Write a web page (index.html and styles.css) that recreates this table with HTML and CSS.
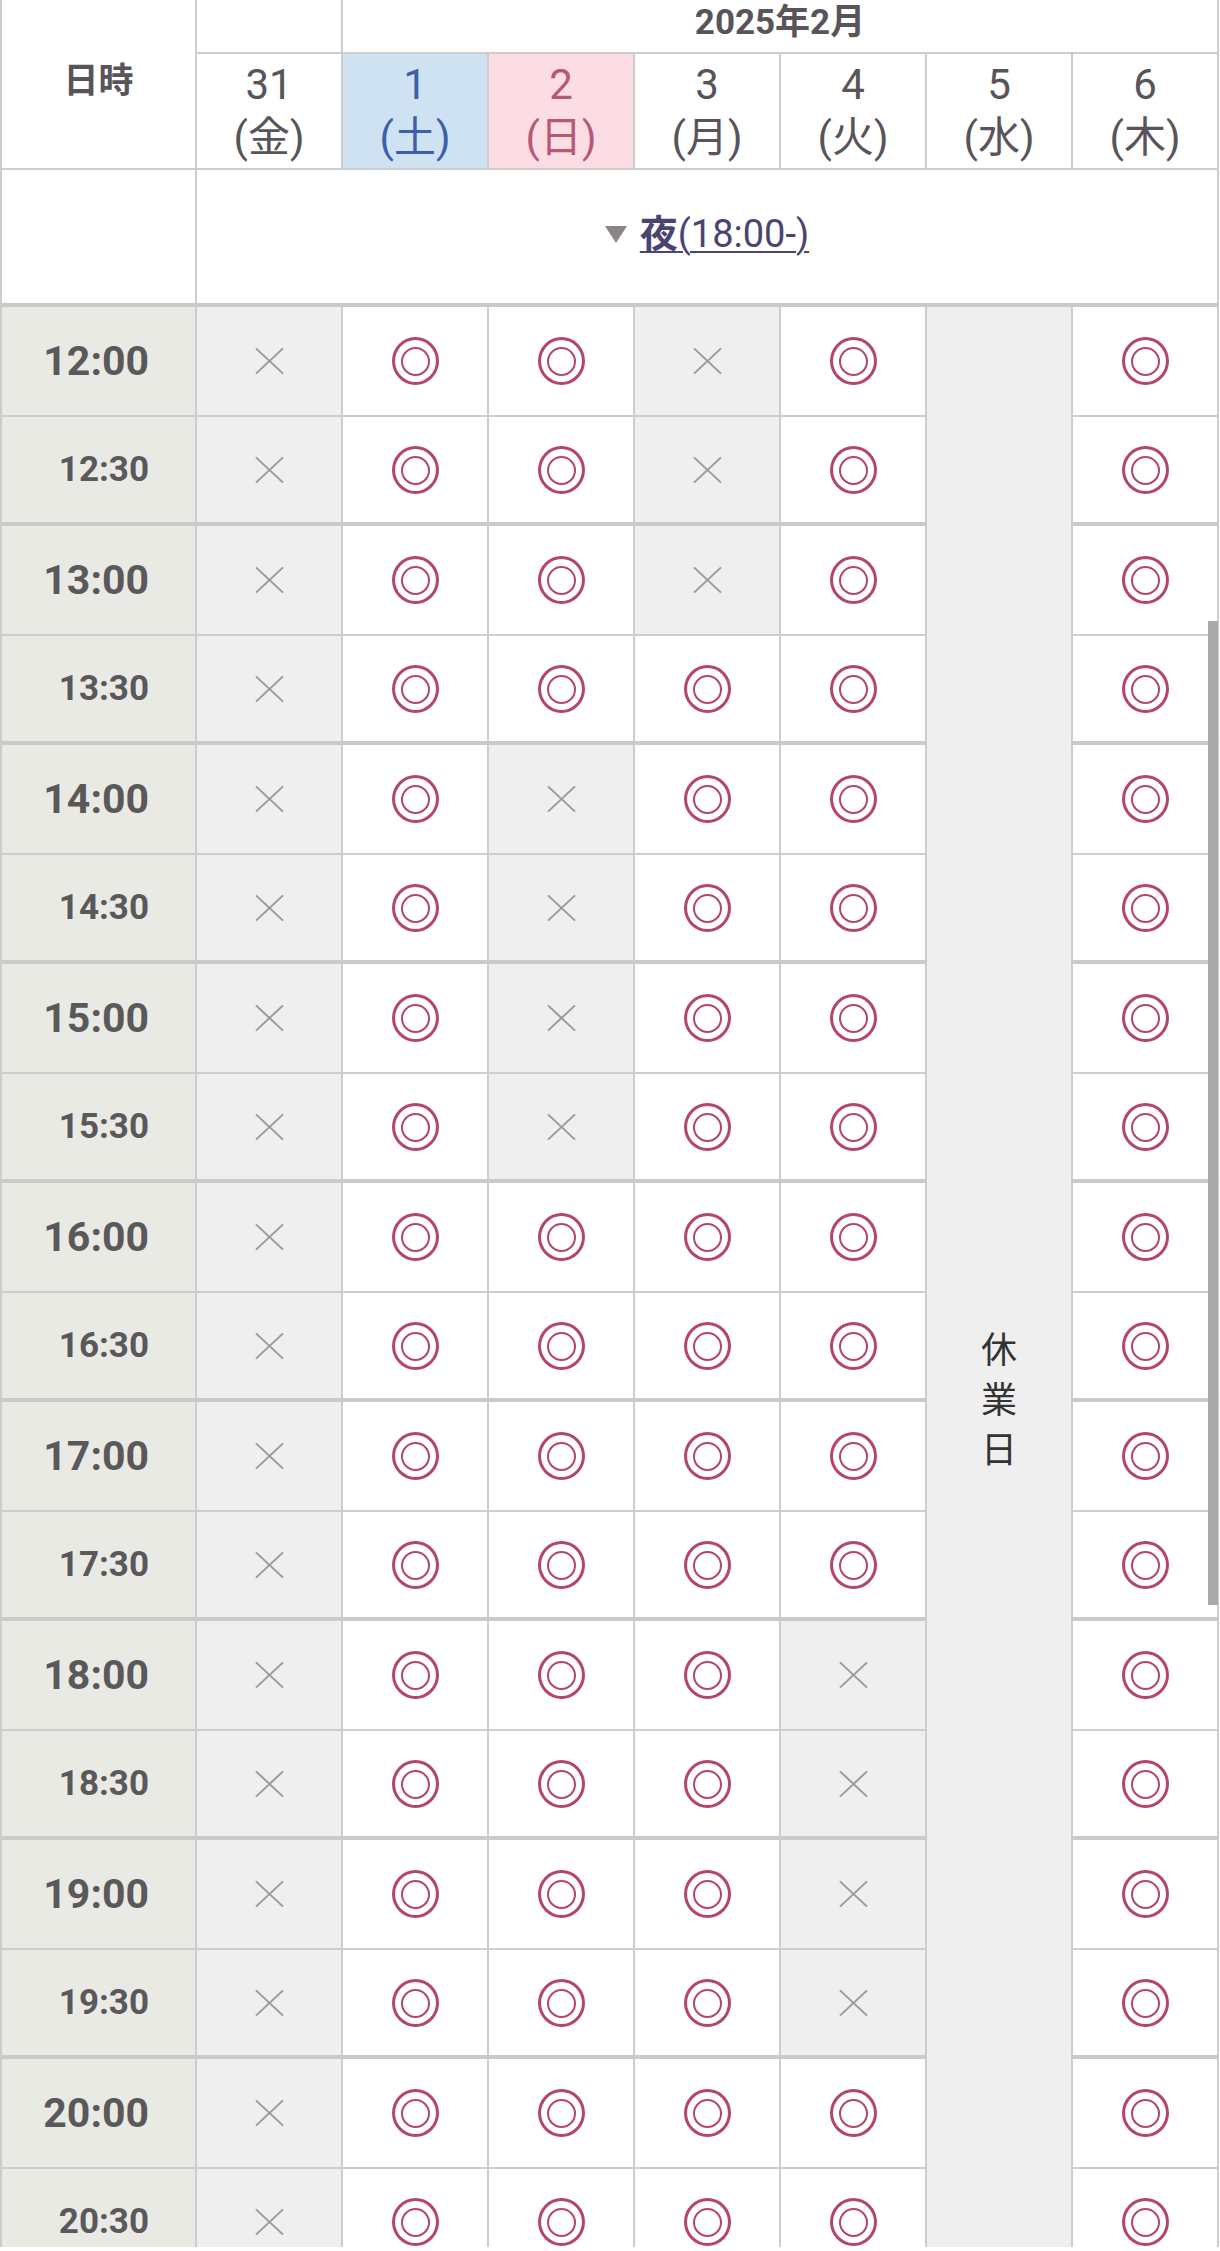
FILE: index.html
```html
<!DOCTYPE html>
<html lang="ja">
<head>
<meta charset="utf-8">
<title>予約カレンダー</title>
<link rel="stylesheet" href="styles.css">
</head>
<body>
<div class="wrap">
<table class="cal">
  <colgroup>
    <col class="c-time">
    <col class="c-day"><col class="c-day"><col class="c-day"><col class="c-day"><col class="c-day"><col class="c-day"><col class="c-day">
  </colgroup>
  <thead>
    <tr class="hd1">
      <th class="hd-date" rowspan="2"><span class="lbl">日時</span></th>
      <th></th>
      <th class="hd-month" colspan="6"><span class="lbl">2025年2月</span></th>
    </tr>
    <tr class="hd2">
      <th class="day">31<br>(金)</th>
      <th class="day sat">1<br>(土)</th>
      <th class="day sun">2<br>(日)</th>
      <th class="day">3<br>(月)</th>
      <th class="day">4<br>(火)</th>
      <th class="day">5<br>(水)</th>
      <th class="day">6<br>(木)</th>
    </tr>
    <tr class="hd3">
      <th></th>
      <th colspan="7" class="period"><span class="lbl"><span class="tri"></span><a href="#" class="plink"><b>夜</b>(18:00-)</a></span></th>
    </tr>
  </thead>
  <tbody>
    <tr class="ra"><th class="tm hr">12:00</th><td class="ng"><i class="x"></i></td><td><i class="o"></i></td><td><i class="o"></i></td><td class="ng"><i class="x"></i></td><td><i class="o"></i></td><td class="off" rowspan="20">休<br>業<br>日</td><td><i class="o"></i></td></tr>
    <tr class="rb"><th class="tm">12:30</th><td class="ng"><i class="x"></i></td><td><i class="o"></i></td><td><i class="o"></i></td><td class="ng"><i class="x"></i></td><td><i class="o"></i></td><td><i class="o"></i></td></tr>
    <tr class="ra"><th class="tm hr">13:00</th><td class="ng"><i class="x"></i></td><td><i class="o"></i></td><td><i class="o"></i></td><td class="ng"><i class="x"></i></td><td><i class="o"></i></td><td><i class="o"></i></td></tr>
    <tr class="rb"><th class="tm">13:30</th><td class="ng"><i class="x"></i></td><td><i class="o"></i></td><td><i class="o"></i></td><td><i class="o"></i></td><td><i class="o"></i></td><td><i class="o"></i></td></tr>
    <tr class="ra"><th class="tm hr">14:00</th><td class="ng"><i class="x"></i></td><td><i class="o"></i></td><td class="ng"><i class="x"></i></td><td><i class="o"></i></td><td><i class="o"></i></td><td><i class="o"></i></td></tr>
    <tr class="rb"><th class="tm">14:30</th><td class="ng"><i class="x"></i></td><td><i class="o"></i></td><td class="ng"><i class="x"></i></td><td><i class="o"></i></td><td><i class="o"></i></td><td><i class="o"></i></td></tr>
    <tr class="ra"><th class="tm hr">15:00</th><td class="ng"><i class="x"></i></td><td><i class="o"></i></td><td class="ng"><i class="x"></i></td><td><i class="o"></i></td><td><i class="o"></i></td><td><i class="o"></i></td></tr>
    <tr class="rb"><th class="tm">15:30</th><td class="ng"><i class="x"></i></td><td><i class="o"></i></td><td class="ng"><i class="x"></i></td><td><i class="o"></i></td><td><i class="o"></i></td><td><i class="o"></i></td></tr>
    <tr class="ra"><th class="tm hr">16:00</th><td class="ng"><i class="x"></i></td><td><i class="o"></i></td><td><i class="o"></i></td><td><i class="o"></i></td><td><i class="o"></i></td><td><i class="o"></i></td></tr>
    <tr class="rb"><th class="tm">16:30</th><td class="ng"><i class="x"></i></td><td><i class="o"></i></td><td><i class="o"></i></td><td><i class="o"></i></td><td><i class="o"></i></td><td><i class="o"></i></td></tr>
    <tr class="ra"><th class="tm hr">17:00</th><td class="ng"><i class="x"></i></td><td><i class="o"></i></td><td><i class="o"></i></td><td><i class="o"></i></td><td><i class="o"></i></td><td><i class="o"></i></td></tr>
    <tr class="rb"><th class="tm">17:30</th><td class="ng"><i class="x"></i></td><td><i class="o"></i></td><td><i class="o"></i></td><td><i class="o"></i></td><td><i class="o"></i></td><td><i class="o"></i></td></tr>
    <tr class="ra"><th class="tm hr">18:00</th><td class="ng"><i class="x"></i></td><td><i class="o"></i></td><td><i class="o"></i></td><td><i class="o"></i></td><td class="ng"><i class="x"></i></td><td><i class="o"></i></td></tr>
    <tr class="rb"><th class="tm">18:30</th><td class="ng"><i class="x"></i></td><td><i class="o"></i></td><td><i class="o"></i></td><td><i class="o"></i></td><td class="ng"><i class="x"></i></td><td><i class="o"></i></td></tr>
    <tr class="ra"><th class="tm hr">19:00</th><td class="ng"><i class="x"></i></td><td><i class="o"></i></td><td><i class="o"></i></td><td><i class="o"></i></td><td class="ng"><i class="x"></i></td><td><i class="o"></i></td></tr>
    <tr class="rb"><th class="tm">19:30</th><td class="ng"><i class="x"></i></td><td><i class="o"></i></td><td><i class="o"></i></td><td><i class="o"></i></td><td class="ng"><i class="x"></i></td><td><i class="o"></i></td></tr>
    <tr class="ra"><th class="tm hr">20:00</th><td class="ng"><i class="x"></i></td><td><i class="o"></i></td><td><i class="o"></i></td><td><i class="o"></i></td><td><i class="o"></i></td><td><i class="o"></i></td></tr>
    <tr class="rb"><th class="tm">20:30</th><td class="ng"><i class="x"></i></td><td><i class="o"></i></td><td><i class="o"></i></td><td><i class="o"></i></td><td><i class="o"></i></td><td><i class="o"></i></td></tr>
    <tr class="ra"><th class="tm hr">21:00</th><td class="ng"><i class="x"></i></td><td><i class="o"></i></td><td><i class="o"></i></td><td><i class="o"></i></td><td><i class="o"></i></td><td><i class="o"></i></td></tr>
    <tr class="rb"><th class="tm">21:30</th><td class="ng"><i class="x"></i></td><td><i class="o"></i></td><td><i class="o"></i></td><td><i class="o"></i></td><td><i class="o"></i></td><td><i class="o"></i></td></tr>
  </tbody>
</table>
<div class="thumb"></div>
</div>
</body>
</html>
```

FILE: styles.css
```css
html, body {
  margin: 0;
  padding: 0;
  background: #fff;
}
body {
  font-family: Roboto, "Noto Sans CJK JP", sans-serif;
  color: #58545a;
}
.wrap {
  position: relative;
  height: 2247px;
  overflow: hidden;
}
.cal {
  border-collapse: collapse;
  table-layout: fixed;
  width: 1219px;
}
.c-time { width: 195px; }
.c-day { width: 146px; }
.cal th, .cal td {
  border: 2px solid #cdcdcd;
  padding: 0;
  text-align: center;
  vertical-align: middle;
}
.cal .hd1 > * { border-top: 0; }
.hd1 { height: 53px; }
.hd2 { height: 116px; }
.hd3 { height: 136px; }
.hd-date, .hd-month {
  font-size: 35px;
  font-weight: 700;
  line-height: 35px;
  color: #58545a;
}
.lbl {
  display: inline-block;
  vertical-align: middle;
}
.hd-date .lbl { margin-bottom: 6px; }
.hd-month .lbl { margin-bottom: 7px; }
.day {
  font-size: 42px;
  font-weight: 400;
  line-height: 53px;
  color: #58545a;
}
.day.sat { background: #cee2f2; color: #3d5fa9; }
.day.sun { background: #fddde4; color: #b85879; }
.period {
  font-size: 38px;
  font-weight: 400;
  line-height: 44px;
}
.period .lbl { margin-bottom: 6px; }
.tri {
  display: inline-block;
  width: 0;
  height: 0;
  border-left: 11px solid transparent;
  border-right: 11px solid transparent;
  border-top: 17px solid #8b8587;
  margin-right: 13px;
  vertical-align: 4px;
}
.plink {
  color: #4a4570;
  text-decoration: underline;
  text-decoration-thickness: 2px;
  text-underline-offset: 4px;
}
.plink b { font-weight: 700; }
.ra { height: 111px; }
.rb { height: 108px; }
.cal .ra > * { border-top: 4px solid #cacaca; }
.cal .tm {
  background: #eaeae4;
  text-align: right;
  padding-right: 46px;
  font-size: 35px;
  font-weight: 700;
  color: #5a585b;
}
.cal .tm.hr { font-size: 41px; }
.ng { background: #efefef; }
.off {
  background: #efefef;
  color: #333;
  font-size: 36px;
  line-height: 50px;
}
.o {
  display: inline-block;
  position: relative;
  box-sizing: border-box;
  width: 47px;
  height: 48px;
  border: 3px solid #b4466c;
  border-radius: 50%;
  vertical-align: middle;
}
.o::after {
  content: "";
  position: absolute;
  left: 6px;
  top: 7px;
  right: 6px;
  bottom: 6px;
  border: 2.5px solid #b4466c;
  border-radius: 50%;
}
.x {
  display: inline-block;
  position: relative;
  width: 28px;
  height: 26px;
  vertical-align: middle;
}
.x::before, .x::after {
  content: "";
  position: absolute;
  left: 50%;
  top: 50%;
  width: 37px;
  height: 2px;
  margin-left: -18.5px;
  margin-top: -1px;
  background: #9a9a9a;
  transform: rotate(43deg);
}
.x::after { transform: rotate(-43deg); }
.thumb {
  position: absolute;
  right: 2px;
  top: 621px;
  width: 10px;
  height: 984px;
  background: #a9a9a9;
}
```
